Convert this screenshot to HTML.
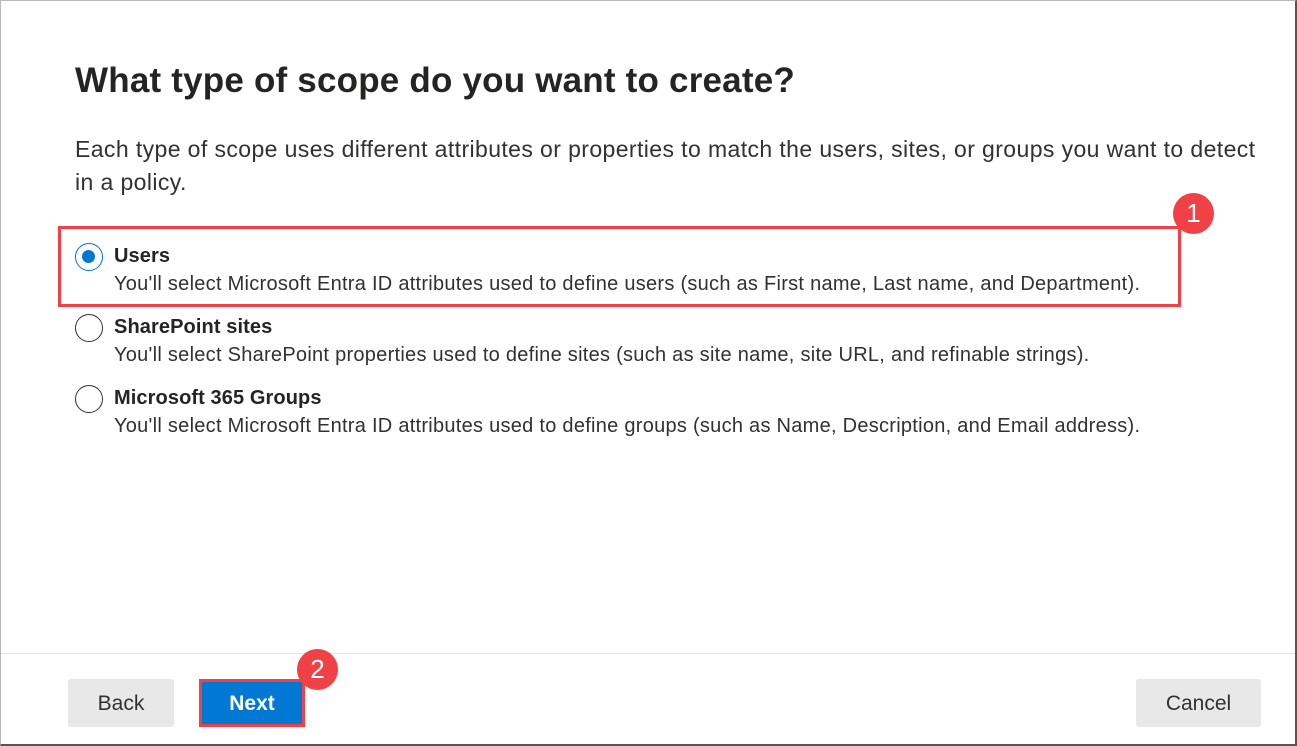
<!DOCTYPE html>
<html><head><meta charset="utf-8"><style>
*{margin:0;padding:0;box-sizing:border-box}
body{width:1297px;height:746px;background:#fff;font-family:"Segoe UI","Liberation Sans",sans-serif;color:#323130;position:relative;overflow:hidden}
.frame{position:absolute;left:0;top:0;width:1297px;height:746px;border:1px solid #b8b8b8;border-right:2px solid #555;border-bottom:2px solid #555}
.a{position:absolute;white-space:nowrap}
h1{position:absolute;left:75px;top:61px;font-size:35px;font-weight:bold;color:#252423;letter-spacing:0.2px}
.p{left:75px;font-size:23px;color:#323130;letter-spacing:0.4px}
.radio{position:absolute;left:75px;width:28px;height:28px;border:1.5px solid #323130;border-radius:50%;background:#fff}
.radio.on{border-color:#0078d4}
.radio.on::after{content:"";position:absolute;left:6px;top:6px;width:13px;height:13px;border-radius:50%;background:#0078d4}
.t{left:114px;font-size:20px;font-weight:bold;color:#252423;letter-spacing:0.1px}
.d{left:114px;font-size:20px;color:#323130;letter-spacing:0.27px}
.btn{position:absolute;top:679px;height:48px;border-radius:3px;background:#e8e8e8;font-size:21px;text-align:center;line-height:48px;color:#323130}
.badge{position:absolute;width:41px;height:41px;border-radius:50%;background:#f04246;color:#fff;font-size:26px;text-align:center;line-height:41px;font-family:"Liberation Sans",sans-serif}
</style></head><body>
<div class="frame"></div>
<h1>What type of scope do you want to create?</h1>
<div class="a p" style="top:136px">Each type of scope uses different attributes or properties to match the users, sites, or groups you want to detect</div>
<div class="a p" style="top:169px">in a policy.</div>

<div class="radio on" style="top:243px"></div>
<div class="a t" style="top:245px">Users</div>
<div class="a d" style="top:273px">You'll select Microsoft Entra ID attributes used to define users (such as First name, Last name, and Department).</div>
<div class="radio" style="top:314px"></div>
<div class="a t" style="top:316px">SharePoint sites</div>
<div class="a d" style="top:344px">You'll select SharePoint properties used to define sites (such as site name, site URL, and refinable strings).</div>
<div class="radio" style="top:385px"></div>
<div class="a t" style="top:387px">Microsoft 365 Groups</div>
<div class="a d" style="top:415px">You'll select Microsoft Entra ID attributes used to define groups (such as Name, Description, and Email address).</div>

<div style="position:absolute;left:58px;top:226px;width:1123px;height:81px;border:3px solid #f04246"></div>
<div class="badge" style="left:1173px;top:193px">1</div>

<div style="position:absolute;left:1px;top:653px;width:1294px;height:1px;background:#e5e5e5"></div>
<div class="btn" style="left:68px;width:106px;line-height:50px">Back</div>
<div class="btn" style="left:199px;width:106px;background:#0078d4;color:#fff;font-weight:bold;border:3px solid #f04246;line-height:44px;border-radius:0">Next</div>
<div class="badge" style="left:297px;top:649px">2</div>
<div class="btn" style="left:1136px;width:125px;line-height:50px">Cancel</div>
</body></html>
